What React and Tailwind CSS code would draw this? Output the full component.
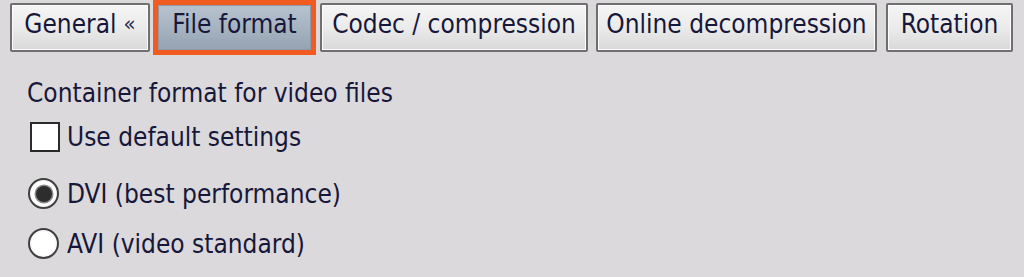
const tabs = [
    { label: 'General', mark: '«', width: 'w-[140px]', gap: 'ml-[10px]' },
    { label: 'File format', width: 'w-[163px]', gap: 'ml-[3px]', active: true },
    { label: 'Codec / compression', width: 'w-[268px]', gap: 'ml-[4px]' },
    { label: 'Online decompression', width: 'w-[281px]', gap: 'ml-[8px]' },
    { label: 'Rotation', width: 'w-[127px]', gap: 'ml-[9px]' },
];

function TabButton({ tab }) {
    if (tab.active) {
        return (
            <button
                type="button"
                className={`${tab.gap} ${tab.width} flex h-[55px] shrink-0 justify-center border-[5px] border-[#f25b20] bg-gradient-to-b from-[#b8c3cf] to-[#95a3b2] pt-[4px] shadow-[inset_0_0_0_1px_#8d99a6]`}
            >
                {tab.label}
            </button>
        );
    }
    return (
        <button
            type="button"
            className={`${tab.gap} ${tab.width} mt-[3px] flex h-[49px] shrink-0 items-start justify-center rounded-[2px] border-2 border-[#6f6f6f] bg-gradient-to-b from-[#f5f5f5] via-[#ebebeb] to-[#d9d9d9] pt-[4px] shadow-[inset_0_0_0_1px_#fbfbfb]`}
        >
            {tab.label}
            {tab.mark && (
                <span className="ml-[7px] text-[22px] leading-[30px] text-[#2a2f5a]">
                    {tab.mark}
                </span>
            )}
        </button>
    );
}

function Radio({ checked, label }) {
    return (
        <div className="flex h-[31px] items-center">
            <span className="flex h-[31px] w-[31px] items-center justify-center rounded-full border-2 border-[#404040] bg-[radial-gradient(circle,#ffffff_60%,#cfcfcf_100%)]">
                {checked && (
                    <span className="h-[16px] w-[16px] rounded-full bg-[#2d2d2d] shadow-[0_0_0_1.5px_#8a8a8a]" />
                )}
            </span>
            <span className="ml-[8px]">{label}</span>
        </div>
    );
}

export default function App() {
    return (
        <div className="h-[277px] w-[1024px] overflow-hidden bg-[#dbd9dc] text-[26px] leading-[30px] text-[#17173a] [font-family:'DejaVu_Sans_Condensed','DejaVu_Sans',sans-serif]">
            {/* Tab buttons */}
            <div className="flex h-[55px] items-start">
                {tabs.map((tab) => (
                    <TabButton key={tab.label} tab={tab} />
                ))}
            </div>

            {/* Options */}
            <div className="flex flex-col pl-[28px]">
                <p className="-ml-[1px] mt-[23px]">Container format for video files</p>

                <label className="mt-[13px] flex h-[31px] items-center">
                    <span className="ml-[2px] h-[30px] w-[30px] border-2 border-[#2a2a2a] bg-white" />
                    <span className="ml-[7px]">Use default settings</span>
                </label>

                <div className="mt-[26px]">
                    <Radio checked label="DVI (best performance)" />
                </div>
                <div className="mt-[19px]">
                    <Radio label="AVI (video standard)" />
                </div>
            </div>
        </div>
    );
}
